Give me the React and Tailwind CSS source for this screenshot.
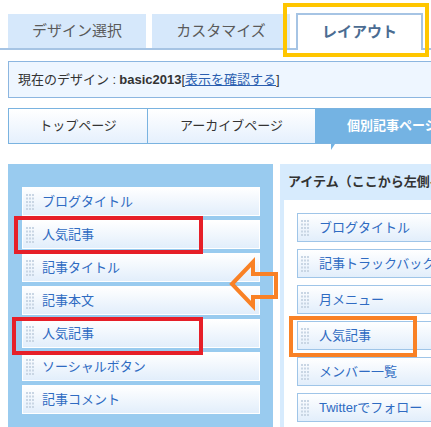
import React from 'react'

const leftItems = ['ブログタイトル', '人気記事', '記事タイトル', '記事本文', '人気記事', 'ソーシャルボタン', '記事コメント']
const rightItems = ['ブログタイトル', '記事トラックバック', '月メニュー', '人気記事', 'メンバー一覧', 'Twitterでフォロー']

function Grip() {
  const dots = []
  for (let r = 0; r < 5; r++) {
    for (let c = 0; c < 3; c++) {
      dots.push(<rect key={`${r}-${c}`} x={c * 3} y={r * 3.5} width="2" height="2" fill="#c9d6e4" />)
    }
  }
  return (
    <svg width="8" height="16" viewBox="0 0 8 16" className="shrink-0">
      {dots}
    </svg>
  )
}

function Item({ label, right }) {
  return (
    <div
      className={`h-[29px] shrink-0 flex items-center bg-gradient-to-b from-white to-[#e2eefb] ${
        right ? 'border border-[#9fc5e8] w-[150px] pl-[3px]' : 'border border-white w-[238px] pl-[3px]'
      }`}
    >
      <Grip />
      <span className={`text-[13px] text-[#2f6bc2] ${right ? 'ml-[10px]' : 'ml-[8px]'} whitespace-nowrap`}>{label}</span>
    </div>
  )
}

export default function App() {
  return (
    <div
      className="relative w-[431px] h-[427px] overflow-hidden bg-white"
      style={{ fontFamily: '"Liberation Sans", "Noto Sans CJK JP", sans-serif' }}
    >
      {/* 上部タブ */}
      <div className="flex items-end pt-[14px] pl-2 border-b-2 border-[#a6c4e4] h-[50px]">
        <div className="shrink-0 w-[138px] h-[34px] bg-[#d6e8fb] flex items-center justify-center text-[15px] text-[#5a5a5a]">
          デザイン選択
        </div>
        <div className="shrink-0 ml-[6px] w-[138px] h-[34px] bg-[#d6e8fb] flex items-center justify-center text-[15px] text-[#5a5a5a]">
          カスタマイズ
        </div>
        <div className="shrink-0 ml-[6px] w-[127px] h-[37px] -mb-[2px] bg-white border-2 border-b-0 border-[#a6c4e4] flex items-center justify-center text-[15px] font-bold text-[#4b6c92]">
          レイアウト
        </div>
      </div>

      {/* 現在のデザイン */}
      <div className="mt-[11px] ml-2 h-[37px] w-[440px] bg-[#eef6ff] border border-[#8cb6e0] flex items-center pl-[9px] text-[13px] text-[#333] whitespace-nowrap">
        現在のデザイン : <span className="font-bold ml-[3px]">basic2013</span>[<span className="text-[#2b5fb0] underline">表示を確認する</span>]
      </div>

      {/* ページ種別タブ */}
      <div className="relative mt-[10px] ml-2 flex h-[36px] w-[440px] border border-[#7ab3e0]">
        <div className="shrink-0 w-[139px] flex items-center justify-center bg-gradient-to-b from-white to-[#e5f0fd] text-[13px] text-[#333] border-r border-[#7ab3e0]">
          トップページ
        </div>
        <div className="shrink-0 w-[167px] flex items-center justify-center bg-gradient-to-b from-white to-[#e5f0fd] text-[13px] text-[#333]">
          アーカイブページ
        </div>
        <div className="flex-1 flex items-center pl-[32px] bg-[#74b3e3] text-[13px] font-bold text-white whitespace-nowrap">
          個別記事ページ
        </div>
        <div className="absolute left-[322px] top-[35px] w-0 h-0 border-l-[4px] border-l-[#74b3e3] border-r-[4px] border-r-transparent border-b-[6px] border-b-transparent" />
      </div>

      {/* レイアウト領域 */}
      <div className="mt-[20px] ml-2 flex gap-[7px]">
        <div className="shrink-0 w-[265px] h-[270px] bg-[#99cbef] pt-[23px] pl-[14px] flex flex-col gap-[4px]">
          {leftItems.map((t, i) => (
            <Item key={i} label={t} />
          ))}
        </div>
        <div className="shrink-0 w-[160px] h-[270px] bg-[#d7ebfd] flex flex-col">
          <div className="h-[36px] flex items-center pl-[8px] text-[13px] font-bold text-[#333] whitespace-nowrap">
            アイテム（ここから左側へドラッグ）
          </div>
          <div className="flex-1 ml-[4px] bg-white pt-[13px] pl-[13px] flex flex-col gap-[7px]">
            {rightItems.map((t, i) => (
              <Item key={i} label={t} right />
            ))}
          </div>
        </div>
      </div>

      {/* 注釈 */}
      <div className="absolute left-[283px] top-[3px] w-[146px] h-[54px] border-4 border-[#ffc600]" />
      <div className="absolute left-[14px] top-[216px] w-[189px] h-[38px] border-4 border-[#e61f28]" />
      <div className="absolute left-[12px] top-[317px] w-[191px] h-[38px] border-4 border-[#e61f28]" />
      <div className="absolute left-[289px] top-[316px] w-[128px] h-[41px] border-4 border-[#f98125]" />
      <svg className="absolute left-0 top-0" width="431" height="427" viewBox="0 0 431 427">
        <polygon
          points="232,284 253,262 253,274 276,274 276,297 253,297 253,306"
          fill="none"
          stroke="#f98125"
          strokeWidth="4"
          strokeLinejoin="miter"
        />
      </svg>
    </div>
  )
}
